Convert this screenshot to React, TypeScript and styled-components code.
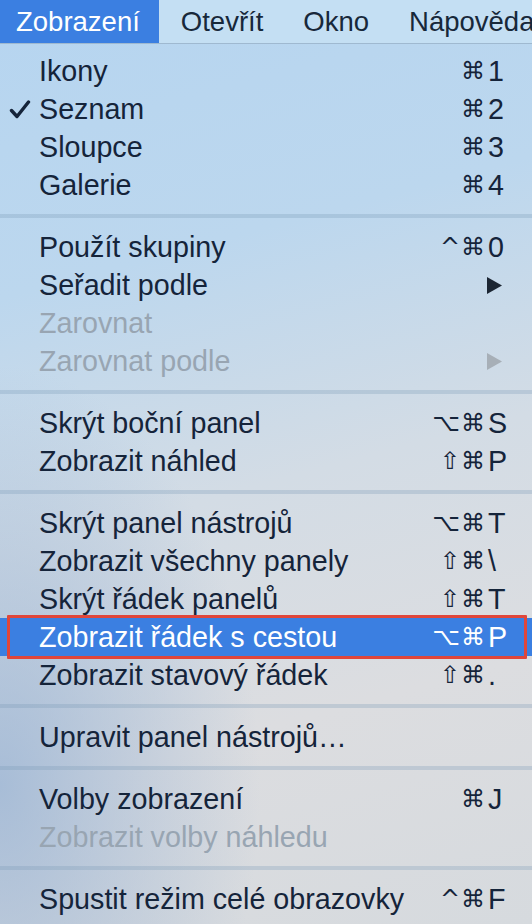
import React from 'react';
import styled, { createGlobalStyle } from 'styled-components';

const GlobalStyle = createGlobalStyle`
  html, body {
    margin: 0;
    padding: 0;
  }
  body {
    font-family: 'Liberation Sans', Arial, sans-serif;
    -webkit-font-smoothing: antialiased;
  }
`;

const Screen = styled.div`
  width: 532px;
  height: 924px;
  overflow: hidden;
  display: flex;
  flex-direction: column;
  background:
    radial-gradient(ellipse 260px 420px at 0% 85%, rgba(150, 178, 212, 0.75), rgba(150, 178, 212, 0) 100%),
    linear-gradient(165deg, #b6d5f0 0%, #bcd7ee 28%, #d3dce5 52%, #dcdde0 75%, #d6dade 100%);
`;

const MenuBar = styled.div`
  height: 43px;
  display: flex;
  align-items: stretch;
  background: #c4dff3;
  border-bottom: 1px solid #9fb9d0;
  white-space: nowrap;
`;

const BarItem = styled.div<{ $active?: boolean; $first?: boolean }>`
  display: flex;
  align-items: center;
  padding: ${({ $first }) => ($first ? '0 19px 0 16px' : '0 18px 0 22px')};
  font-size: 27.5px;
  color: ${({ $active }) => ($active ? '#ffffff' : '#17283a')};
  background: ${({ $active }) => ($active ? '#3b7fe1' : 'transparent')};
`;

const Menu = styled.div`
  display: flex;
  flex-direction: column;
  padding-top: 8px;
`;

const Row = styled.div<{ $disabled?: boolean; $selected?: boolean }>`
  position: relative;
  height: 38px;
  display: flex;
  align-items: center;
  padding: 0 16px 0 39px;
  font-size: 28.7px;
  color: ${({ $disabled, $selected }) =>
    $selected ? '#ffffff' : $disabled ? '#98a5b2' : '#15243a'};
  background: ${({ $selected }) => ($selected ? '#3b7fe1' : 'transparent')};
  white-space: nowrap;
`;

const Outline = styled.div`
  position: absolute;
  left: 7px;
  right: 5px;
  top: -3px;
  bottom: -3px;
  border: 3px solid #e0463a;
  border-radius: 1px;
  pointer-events: none;
`;

const Label = styled.span`
  flex: 1;
`;

const Check = styled.svg`
  position: absolute;
  left: 9px;
  top: 10px;
  width: 22px;
  height: 19px;
`;

const Shortcut = styled.span`
  display: flex;
  align-items: center;
`;

const Mods = styled.span`
  font-family: 'DejaVu Sans', 'Liberation Sans', sans-serif;
  font-size: 24px;
  letter-spacing: 1px;
`;

const Key = styled.span`
  width: 28px;
  text-align: left;
  padding-left: 2px;
`;

const Arrow = styled.svg`
  width: 16px;
  height: 17px;
  margin-right: 14px;
`;

const Separator = styled.div`
  height: 24px;
  display: flex;
  align-items: center;

  &::after {
    content: '';
    flex: 1;
    height: 4px;
    background: rgba(120, 150, 180, 0.28);
  }
`;

type Item =
  | { sep: true }
  | {
      label: string;
      mods?: string;
      keyChar?: string;
      disabled?: boolean;
      checked?: boolean;
      submenu?: boolean;
      selected?: boolean;
    };

const items: Item[] = [
  { label: 'Ikony', mods: '⌘', keyChar: '1' },
  { label: 'Seznam', mods: '⌘', keyChar: '2', checked: true },
  { label: 'Sloupce', mods: '⌘', keyChar: '3' },
  { label: 'Galerie', mods: '⌘', keyChar: '4' },
  { sep: true },
  { label: 'Použít skupiny', mods: '^⌘', keyChar: '0' },
  { label: 'Seřadit podle', submenu: true },
  { label: 'Zarovnat', disabled: true },
  { label: 'Zarovnat podle', submenu: true, disabled: true },
  { sep: true },
  { label: 'Skrýt boční panel', mods: '⌥⌘', keyChar: 'S' },
  { label: 'Zobrazit náhled', mods: '⇧⌘', keyChar: 'P' },
  { sep: true },
  { label: 'Skrýt panel nástrojů', mods: '⌥⌘', keyChar: 'T' },
  { label: 'Zobrazit všechny panely', mods: '⇧⌘', keyChar: '\\' },
  { label: 'Skrýt řádek panelů', mods: '⇧⌘', keyChar: 'T' },
  { label: 'Zobrazit řádek s cestou', mods: '⌥⌘', keyChar: 'P', selected: true },
  { label: 'Zobrazit stavový řádek', mods: '⇧⌘', keyChar: '.' },
  { sep: true },
  { label: 'Upravit panel nástrojů…' },
  { sep: true },
  { label: 'Volby zobrazení', mods: '⌘', keyChar: 'J' },
  { label: 'Zobrazit volby náhledu', disabled: true },
  { sep: true },
  { label: 'Spustit režim celé obrazovky', mods: '^⌘', keyChar: 'F' },
];

export default function App() {
  return (
    <Screen>
      <GlobalStyle />
      <MenuBar>
        <BarItem $active $first>Zobrazení</BarItem>
        <BarItem>Otevřít</BarItem>
        <BarItem>Okno</BarItem>
        <BarItem>Nápověda</BarItem>
      </MenuBar>
      <Menu>
        {items.map((item, i) => {
          if ('sep' in item) return <Separator key={i} />;
          return (
            <Row key={i} $disabled={item.disabled} $selected={item.selected}>
              {item.checked && (
                <Check viewBox="0 0 22 19">
                  <path d="M2.5 10.5 L8 16.5 L19.5 2" fill="none" stroke="#15243a" strokeWidth="3.4" strokeLinecap="round" strokeLinejoin="round" />
                </Check>
              )}
              <Label>{item.label}</Label>
              {item.submenu && (
                <Arrow viewBox="0 0 16 17">
                  <polygon points="1,0 16,8.5 1,17" fill={item.disabled ? '#a7afb7' : '#1c2633'} />
                </Arrow>
              )}
              {item.keyChar && (
                <Shortcut>
                  <Mods>{item.mods}</Mods>
                  <Key>{item.keyChar}</Key>
                </Shortcut>
              )}
              {item.selected && <Outline />}
            </Row>
          );
        })}
      </Menu>
    </Screen>
  );
}
